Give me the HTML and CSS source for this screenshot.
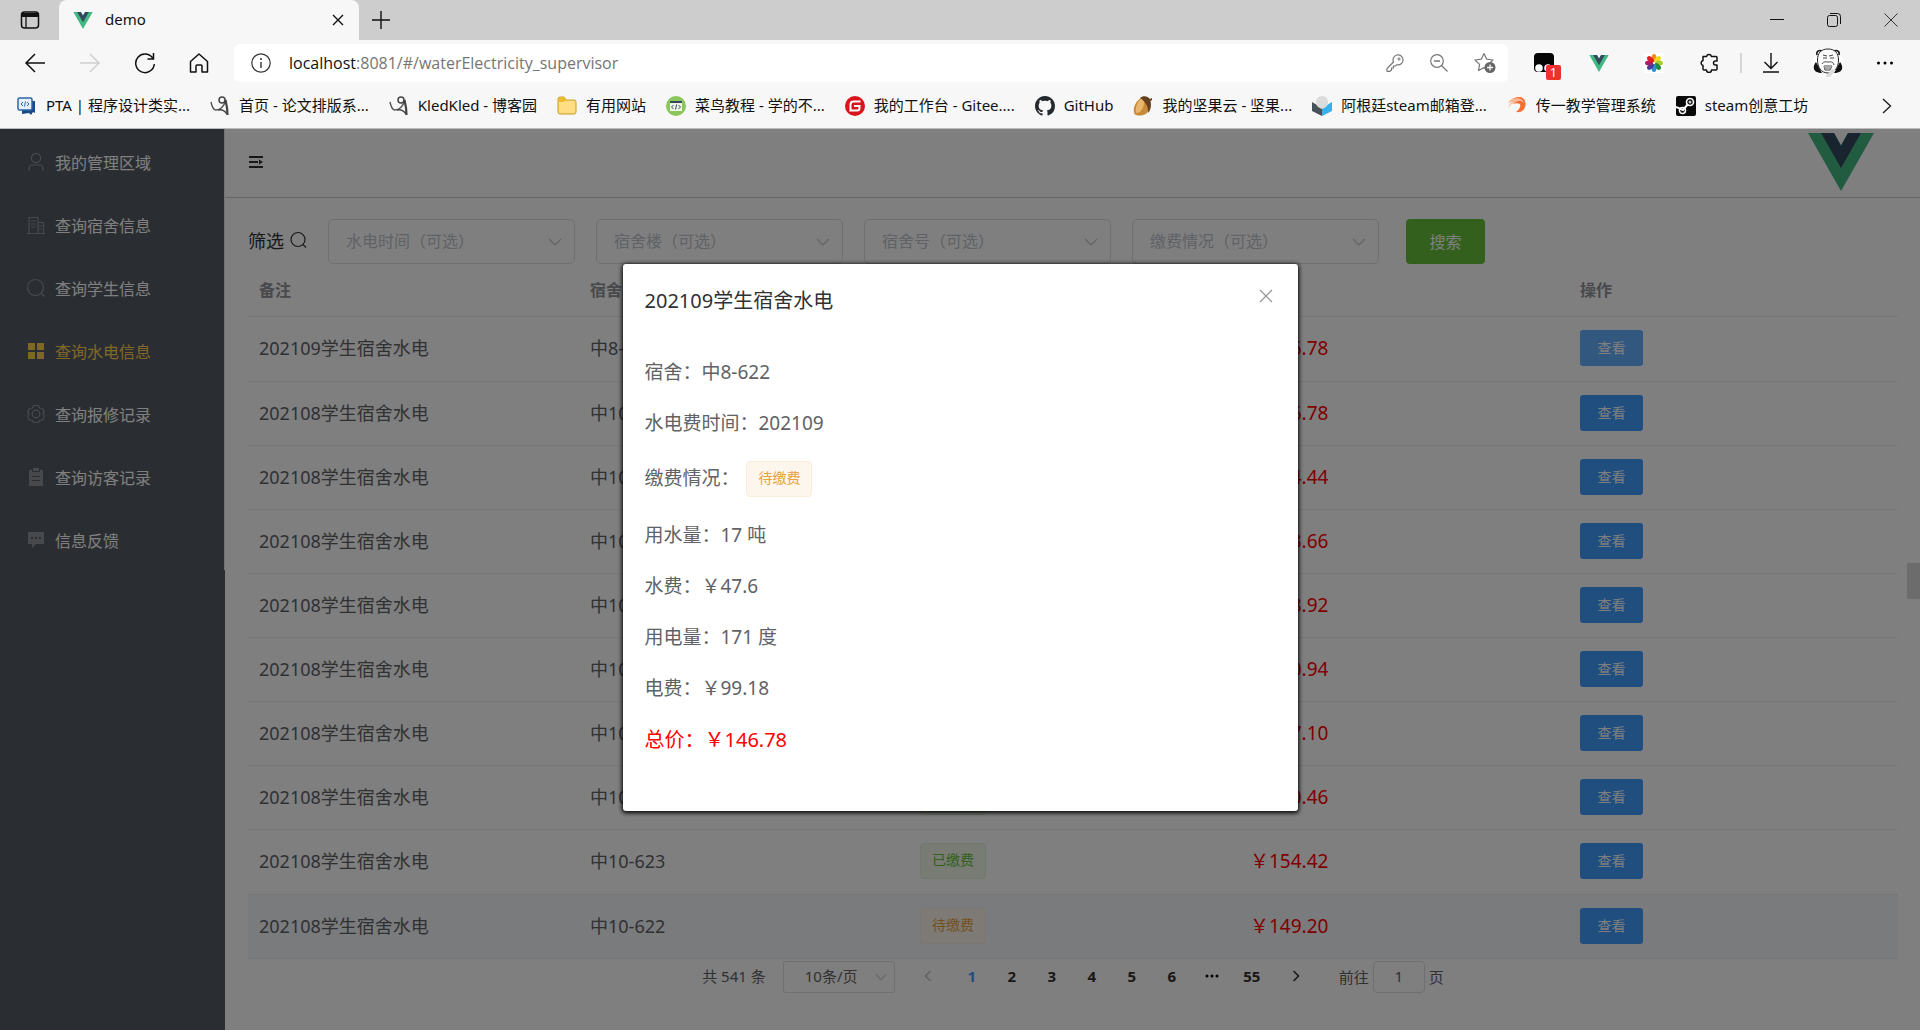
FILE: index.html
```html
<!DOCTYPE html>
<html lang="zh-CN">
<head>
<meta charset="utf-8">
<title>demo</title>
<link rel="stylesheet" href="styles.css">
</head>
<body>
<svg class="defs" aria-hidden="true">
  <symbol id="vue" viewBox="0 0 66 58"><path fill="#42b883" d="M0 0h26l7 12 7-12h26L33 58z"/><path fill="#35495e" d="M13 0h13l7 13 7-13h13L33 35z"/></symbol>
  <symbol id="down" viewBox="0 0 14 14"><path d="M1 4l6 6 6-6" fill="none" stroke="#c0c4cc" stroke-width="1.2"/></symbol>
  <symbol id="blog" viewBox="0 0 20 20"><path d="M1 6c1 5 2 8 5 8 4 0 8-4 10-10" fill="none" stroke="#555" stroke-width="1.400"/><path d="M15.500 4c1 4 2 9 2 15" fill="none" stroke="#444" stroke-width="2.200"/><path d="M8 14c4-1 7 1 9 4" fill="none" stroke="#444" stroke-width="1.400"/><circle cx="12" cy="4" r="3" fill="none" stroke="#444" stroke-width="1.500"/></symbol>
</svg>

<header class="browser">
  <div class="tabs">
    <button class="icon-btn tab-menu" aria-label="标签页操作"><svg width="20" height="20" viewBox="0 0 20 20"><rect x="1.500" y="2" width="17" height="16" rx="3" fill="none" stroke="#111" stroke-width="1.500"/><path d="M2 3h16v4H2z" fill="#111"/><path d="M6 6v12" stroke="#111" stroke-width="1.300"/></svg></button>
    <div class="tab">
      <svg width="20" height="17"><use href="#vue"/></svg>
      <span class="tab-title">demo</span>
      <button class="icon-btn" aria-label="关闭标签页"><svg width="12" height="12" viewBox="0 0 12 12"><path d="M1 1l10 10M11 1L1 11" stroke="#111" stroke-width="1.400"/></svg></button>
    </div>
    <button class="icon-btn" aria-label="新建标签页"><svg width="18" height="18" viewBox="0 0 18 18"><path d="M9 0v18M0 9h18" stroke="#111" stroke-width="1.400"/></svg></button>
    <div class="window-controls">
      <button class="icon-btn" aria-label="最小化"><svg width="14" height="14" viewBox="0 0 14 14"><path d="M0 6.500h14" stroke="#111"/></svg></button>
      <button class="icon-btn" aria-label="还原"><svg width="14" height="14" viewBox="0 0 14 14"><rect x=".5" y="2.500" width="10" height="11" rx="2" fill="none" stroke="#111"/><path d="M3 .5h7.500q3 0 3 3V11" fill="none" stroke="#111"/></svg></button>
      <button class="icon-btn" aria-label="关闭"><svg width="14" height="14" viewBox="0 0 14 14"><path d="M.5.5l13 13M13.500.5l-13 13" stroke="#333"/></svg></button>
    </div>
  </div>

  <div class="toolbar">
    <div class="nav-buttons">
      <button class="icon-btn" aria-label="后退"><svg width="22" height="20" viewBox="0 0 22 20"><path d="M21 10H2M11 1l-9 9 9 9" fill="none" stroke="#111" stroke-width="1.500"/></svg></button>
      <button class="icon-btn" aria-label="前进"><svg width="22" height="20" viewBox="0 0 22 20"><path d="M1 10h19M11 1l9 9-9 9" fill="none" stroke="#d0d0d0" stroke-width="1.500"/></svg></button>
      <button class="icon-btn" aria-label="刷新"><svg width="22" height="22" viewBox="0 0 22 22"><path d="M19 6.500A9.300 9.300 0 1 0 20.300 12M19.500 1v6h-6" fill="none" stroke="#111" stroke-width="1.500"/></svg></button>
      <button class="icon-btn" aria-label="主页"><svg width="20" height="22" viewBox="0 0 20 22"><path d="M1.500 9.500L10 2l8.500 7.500V20h-5.500v-6q0-1-1-1H8q-1 0-1 1v6H1.500z" fill="none" stroke="#111" stroke-width="1.500" stroke-linejoin="round"/></svg></button>
    </div>
    <div class="address">
      <svg width="20" height="20" viewBox="0 0 20 20"><circle cx="10" cy="10" r="9.200" fill="none" stroke="#333" stroke-width="1.200"/><path d="M10 9v6" stroke="#333" stroke-width="1.400"/><circle cx="10" cy="6" r="1" fill="#333"/></svg>
      <p class="url">localhost<span>:8081/#/waterElectricity_supervisor</span></p>
      <button class="icon-btn" aria-label="密码"><svg width="18" height="18" viewBox="0 0 18 18"><path d="M7.500 8A5 5 0 1 1 11 10.800L9 12H7.500v2H5.500v2L4 17.300H1V14.500z" fill="none" stroke="#777" stroke-width="1.200" stroke-linejoin="round"/><circle cx="13" cy="5" r="1.100" fill="none" stroke="#777"/></svg></button>
      <button class="icon-btn" aria-label="缩小"><svg width="18" height="18" viewBox="0 0 18 18"><circle cx="7" cy="7" r="6.300" fill="none" stroke="#777" stroke-width="1.200"/><path d="M4 7h6M11.500 11.500l6 6" stroke="#777" stroke-width="1.300"/></svg></button>
      <button class="icon-btn" aria-label="收藏"><svg width="22" height="22" viewBox="0 0 22 22"><path d="M10 1.500l2.700 5.700 6.300.8-4.600 4.400 1.100 6.100L10 15.600 4.500 18.500l1.100-6.100L1 8l6.300-.8z" fill="none" stroke="#777" stroke-width="1.200" stroke-linejoin="round"/><circle cx="16" cy="15.500" r="5.500" fill="#666"/><path d="M16 12.500v6M13 15.500h6" stroke="#fff" stroke-width="1.300"/></svg></button>
    </div>
    <div class="extensions">
      <button class="icon-btn badge-host" aria-label="扩展"><svg width="20" height="20" viewBox="0 0 20 20"><rect width="20" height="19" rx="4" fill="#050505"/><circle cx="5" cy="15" r="3.800" fill="#fff"/><circle cx="14" cy="15" r="3.800" fill="#fff"/></svg><span class="badge">1</span></button>
      <button class="icon-btn" aria-label="Vue"><svg width="20" height="17"><use href="#vue"/></svg></button>
      <button class="icon-btn" aria-label="图库"><svg width="20" height="20" viewBox="0 0 20 20"><rect width="20" height="20" fill="#fff"/><ellipse cx="10" cy="5" rx="2.500" ry="4" fill="#f28a1c"/><ellipse cx="10" cy="5" rx="2.500" ry="4" fill="#f2d91c" transform="rotate(45 10 10)"/><ellipse cx="10" cy="5" rx="2.500" ry="4" fill="#a8cc2e" transform="rotate(90 10 10)"/><ellipse cx="10" cy="5" rx="2.500" ry="4" fill="#1c8a3c" transform="rotate(135 10 10)"/><ellipse cx="10" cy="5" rx="2.500" ry="4" fill="#2a8fd0" transform="rotate(180 10 10)"/><ellipse cx="10" cy="5" rx="2.500" ry="4" fill="#4a3c9a" transform="rotate(225 10 10)"/><ellipse cx="10" cy="5" rx="2.500" ry="4" fill="#a02070" transform="rotate(270 10 10)"/><ellipse cx="10" cy="5" rx="2.500" ry="4" fill="#e01c24" transform="rotate(315 10 10)"/></svg></button>
      <button class="icon-btn" aria-label="扩展管理"><svg width="20" height="20" viewBox="0 0 20 20"><path d="M4 3.500h3.500a2.600 2.600 0 0 1 5 0H17q1 0 1 1v3.500h-1.500a2 2 0 0 0 0 4H18V16q0 1-1 1h-4.500a2.500 2.500 0 0 1-5 0H5q-1 0-1-1v-3.500a2.600 2.600 0 0 1 0-5z" fill="none" stroke="#111" stroke-width="1.500" stroke-linejoin="round"/></svg></button>
      <span class="divider"></span>
      <button class="icon-btn" aria-label="下载"><svg width="16" height="20" viewBox="0 0 16 20"><path d="M8 0v15M1.500 9L8 15.500 14.500 9M0 19h16" fill="none" stroke="#111" stroke-width="1.400"/></svg></button>
      <button class="icon-btn avatar" aria-label="个人资料"><svg width="30" height="30" viewBox="0 0 30 30"><circle cx="15" cy="15" r="15" fill="#fff"/><path d="M3 14c-4 5-3 11 6 11zM27 14c4 5 3 11-6 11z" fill="#111"/><path d="M4 7c-1-4 2-5 5-4M21 3c3-1 6 0 5 4" stroke="#111" stroke-width="1.500" fill="none"/><path d="M15 1C8 1 4.500 5 4.500 12S8 25 15 25s10.500-6 10.500-13S22 1 15 1z" fill="#fafafa" stroke="#222"/><path d="M10 7l4 1M20 7l-4 1M10 10h4M17 10h4M9 16c2-3 4-2 6-2s5-1 6 3M11 18h8l-2 4h-5z" stroke="#444" fill="none"/><path d="M11 18h8l-2 3h-5z" fill="#aaa"/><path d="M12 29l7-8 4 1-6 7z" fill="#ddd"/></svg></button>
      <button class="icon-btn" aria-label="更多"><svg width="18" height="6" viewBox="0 0 18 6"><circle cx="2.500" cy="3" r="1.500"/><circle cx="9" cy="3" r="1.500"/><circle cx="15.500" cy="3" r="1.500"/></svg></button>
    </div>
  </div>

  <nav class="bookmarks" aria-label="书签">
    <a href="#"><svg width="20" height="20" viewBox="0 0 20 20"><path d="M5 5h13v12l-2-1-2 3-2-2-7 1z" fill="#174a86"/><rect x="1" y="2" width="14" height="12" rx="1.500" fill="#e9eff7" stroke="#2c66ab" stroke-width="1.500"/><path d="M6 6L4 8l2 2M10 6l2 2-2 2M8.500 5.500l-1 5" fill="none" stroke="#2c66ab"/></svg><span>PTA | 程序设计类实...</span></a>
    <a href="#"><svg width="20" height="20"><use href="#blog"/></svg><span>首页 - 论文排版系...</span></a>
    <a href="#"><svg width="20" height="20"><use href="#blog"/></svg><span>KledKled - 博客园</span></a>
    <a href="#"><svg width="20" height="20" viewBox="0 0 20 20"><path d="M1 3q0-2 2-2h4l2 3h8q2 0 2 2v10q0 2-2 2H3q-2 0-2-2z" fill="#ffdd83" stroke="#c79a1c"/><path d="M1.500 6H6q2 0 3-2L7.500 1.500H3q-1.500 0-1.500 1.500z" fill="#efba2c"/></svg><span>有用网站</span></a>
    <a href="#"><svg width="20" height="20" viewBox="0 0 20 20"><circle cx="10" cy="10" r="10" fill="#8ac65a"/><rect x="4" y="5" width="12" height="10" fill="#eef5e8"/><path d="M4 5h12v2H4z" fill="#34495e"/><path d="M7.500 9l-2 2 2 2M12.500 9l2 2-2 2M10.600 8.500l-1 5" stroke="#34495e" fill="none"/></svg><span>菜鸟教程 - 学的不...</span></a>
    <a href="#"><svg width="20" height="20" viewBox="0 0 20 20"><circle cx="10" cy="10" r="10" fill="#d8141d"/><path d="M15.500 5.500H8.500q-3 0-3 3v6h6.500q2.500 0 2.500-2.500v-2H9" fill="none" stroke="#fff" stroke-width="2"/></svg><span>我的工作台 - Gitee....</span></a>
    <a href="#"><svg width="20" height="20" viewBox="0 0 16 16"><path fill="#24292e" d="M8 0C3.580 0 0 3.580 0 8c0 3.540 2.290 6.530 5.470 7.590.4.070.55-.17.55-.38 0-.19-.01-.82-.01-1.490-2.010.37-2.530-.49-2.690-.94-.09-.23-.48-.94-.82-1.130-.28-.15-.68-.52-.01-.53.63-.01 1.080.58 1.230.82.72 1.210 1.870.87 2.330.66.07-.52.28-.87.51-1.070-1.780-.2-3.640-.89-3.640-3.950 0-.87.31-1.590.82-2.150-.08-.2-.36-1.020.08-2.120 0 0 .67-.21 2.200.82.64-.18 1.320-.27 2-.27s1.360.09 2 .27c1.530-1.040 2.200-.82 2.200-.82.44 1.100.16 1.920.08 2.120.51.56.82 1.270.82 2.150 0 3.070-1.870 3.750-3.650 3.950.29.25.54.73.54 1.480 0 1.070-.01 1.930-.01 2.200 0 .21.15.46.55.38A8.010 8.010 0 0 0 16 8c0-4.420-3.580-8-8-8z"/></svg><span>GitHub</span></a>
    <a href="#"><svg width="20" height="20" viewBox="0 0 20 20"><path d="M8 2C3 5 0 11 1 16q0 3 4 3.500c6 .5 11-2 12-9z" fill="#c98a3c"/><path d="M8 3c-4 3-6 9-5 14 6 0 9-8 8-14z" fill="#e9b86c"/><path d="M7 2c3-3 8-2 10 1l2-1v2l-1.500 1c1 4 .5 9-2.500 12C16 11 12 5 7 2z" fill="#65401f"/></svg><span>我的坚果云 - 坚果...</span></a>
    <a href="#"><svg width="20" height="20" viewBox="0 0 20 20"><path d="M0 6l10 6v8L0 15z" fill="#46515a"/><path d="M20 6l-10 6v8l10-5z" fill="#35b1ee"/><path d="M10 0c4 0 6 3 6 6s-1 5-6 7C5 11 4 9 4 6s2-6 6-6z" fill="#dcdcdc"/></svg><span>阿根廷steam邮箱登...</span></a>
    <a href="#"><svg width="20" height="20" viewBox="0 0 20 20"><path d="M5 3c7-4 12-1 13 3-2-2-8-2-13 2-2 1-3 2-4 5 0-3 2-6 5-7-2 0-4 0-5 2 0-2 2-4 4-5z" fill="#f9b795"/><path d="M6 3c6-4 12-2 12.500 4 .5 6-4 10-9.500 9 3-2 5-5 4-8-2-1-5-1-7 0 4-4 9-4 11-1-1-4-6-6-11-4z" fill="#f37032"/></svg><span>传一教学管理系统</span></a>
    <a href="#"><svg width="20" height="20" viewBox="0 0 20 20"><rect width="20" height="20" rx="2" fill="#0a0a0a"/><path d="M0 11l7 3 5-6" stroke="#fff" stroke-width="2" fill="none"/><circle cx="14" cy="6" r="3.500" fill="none" stroke="#fff" stroke-width="1.600"/><circle cx="14" cy="6" r="1.500" fill="#ccc"/><circle cx="6.500" cy="14.500" r="3" fill="none" stroke="#fff" stroke-width="1.500"/></svg><span>steam创意工坊</span></a>
    <button class="icon-btn more" aria-label="更多书签"><svg width="10" height="16" viewBox="0 0 10 16"><path d="M1 1l7.500 7L1 15" fill="none" stroke="#222" stroke-width="1.400"/></svg></button>
  </nav>
</header>

<div class="page">
  <aside class="sidebar">
    <nav class="menu">
      <a href="#"><svg width="20" height="20" viewBox="0 0 20 20" fill="none" stroke="currentColor" stroke-width="1.200"><circle cx="10" cy="6" r="4.600"/><path d="M3 19v-2q0-4 4-4h6q4 0 4 4v2"/></svg><span>我的管理区域</span></a>
      <a href="#"><svg width="20" height="20" viewBox="0 0 20 20" fill="none" stroke="currentColor" stroke-width="1.200"><path d="M1 18.500h18M3 18V2.500h9V18M12 7.500h5.500V18M5 6h5M5 9h5M5 12h5M13 11h3M13 14h3"/></svg><span>查询宿舍信息</span></a>
      <a href="#"><svg width="20" height="20" viewBox="0 0 20 20" fill="none" stroke="currentColor" stroke-width="1.200"><circle cx="9.500" cy="9.500" r="8"/><path d="M15.500 15.500l3 3"/></svg><span>查询学生信息</span></a>
      <a href="#" class="active"><svg width="20" height="20" viewBox="0 0 20 20" fill="currentColor"><path d="M2 2h7v7H2zM11 2h7v7h-7zM2 11h7v7H2zM11 11h7v7h-7z"/></svg><span>查询水电信息</span></a>
      <a href="#"><svg width="20" height="20" viewBox="0 0 20 20" fill="none" stroke="currentColor" stroke-width="1.200"><path d="M7.500 1.500h5l1 2.500 3 .5 2 4-1.500 1.500 1.500 2-2 4-3 .5-1 2h-5l-1-2-3-.5-2-4L3 10 1.500 8.500l2-4 3-.5z" stroke-linejoin="round"/><circle cx="10" cy="10" r="3.800"/></svg><span>查询报修记录</span></a>
      <a href="#"><svg width="20" height="20" viewBox="0 0 20 20"><path d="M3 3h3v2h8V3h3v16H3z" fill="currentColor"/><path d="M7 1h6v3H7z" fill="currentColor"/><path d="M6 9.500h8M6 13.500h8" stroke="#545c64" stroke-width="1.200"/></svg><span>查询访客记录</span></a>
      <a href="#"><svg width="20" height="20" viewBox="0 0 20 20"><path d="M2 2h16v12h-8l-4 4v-4H2z" fill="currentColor"/><path d="M5 8h2M9 8h2M13 8h2" stroke="#545c64" stroke-width="2"/></svg><span>信息反馈</span></a>
    </nav>
  </aside>

  <div class="content">
    <header class="page-header">
      <button class="icon-btn" aria-label="折叠菜单"><svg width="16" height="16" viewBox="0 0 16 16"><path d="M1 3h14M1 8h9M1 13h14" stroke="#303133" stroke-width="2"/><path d="M11 5.500l4 2.500-4 2.500z" fill="#303133"/></svg></button>
      <svg width="66" height="58" role="img" aria-label="Vue"><use href="#vue"/></svg>
    </header>

    <main>
      <form class="filters">
        <span class="filter-label">筛选 <svg width="20" height="20" viewBox="0 0 20 20" fill="none" stroke="currentColor" stroke-width="1.200"><circle cx="9" cy="9.500" r="7"/><path d="M14 14.500l3 3"/></svg></span>
        <div class="select"><select aria-label="水电时间"><option>水电时间（可选）</option></select><svg width="14" height="14"><use href="#down"/></svg></div>
        <div class="select"><select aria-label="宿舍楼"><option>宿舍楼（可选）</option></select><svg width="14" height="14"><use href="#down"/></svg></div>
        <div class="select"><select aria-label="宿舍号"><option>宿舍号（可选）</option></select><svg width="14" height="14"><use href="#down"/></svg></div>
        <div class="select"><select aria-label="缴费情况"><option>缴费情况（可选）</option></select><svg width="14" height="14"><use href="#down"/></svg></div>
        <button type="button" class="search">搜索</button>
      </form>

      <table class="bills">
        <thead><tr><th>备注</th><th>宿舍</th><th>缴费情况</th><th>总价</th><th>操作</th></tr></thead>
        <tbody>
          <tr><td>202109学生宿舍水电</td><td>中8-622</td><td><span class="tag warning">待缴费</span></td><td class="price">￥146.78</td><td><button class="view focused">查看</button></td></tr>
          <tr><td>202108学生宿舍水电</td><td>中10-630</td><td><span class="tag success">已缴费</span></td><td class="price">￥146.78</td><td><button class="view">查看</button></td></tr>
          <tr><td>202108学生宿舍水电</td><td>中10-629</td><td><span class="tag success">已缴费</span></td><td class="price">￥134.44</td><td><button class="view">查看</button></td></tr>
          <tr><td>202108学生宿舍水电</td><td>中10-628</td><td><span class="tag success">已缴费</span></td><td class="price">￥153.66</td><td><button class="view">查看</button></td></tr>
          <tr><td>202108学生宿舍水电</td><td>中10-627</td><td><span class="tag success">已缴费</span></td><td class="price">￥148.92</td><td><button class="view">查看</button></td></tr>
          <tr><td>202108学生宿舍水电</td><td>中10-626</td><td><span class="tag success">已缴费</span></td><td class="price">￥150.94</td><td><button class="view">查看</button></td></tr>
          <tr><td>202108学生宿舍水电</td><td>中10-625</td><td><span class="tag success">已缴费</span></td><td class="price">￥137.10</td><td><button class="view">查看</button></td></tr>
          <tr><td>202108学生宿舍水电</td><td>中10-624</td><td><span class="tag success">已缴费</span></td><td class="price">￥140.46</td><td><button class="view">查看</button></td></tr>
          <tr><td>202108学生宿舍水电</td><td>中10-623</td><td><span class="tag success">已缴费</span></td><td class="price">￥154.42</td><td><button class="view">查看</button></td></tr>
          <tr class="hovered"><td>202108学生宿舍水电</td><td>中10-622</td><td><span class="tag warning">待缴费</span></td><td class="price">￥149.20</td><td><button class="view">查看</button></td></tr>
        </tbody>
      </table>

      <nav class="pagination" aria-label="分页">
        <span class="total">共 541 条</span>
        <div class="select page-size"><select aria-label="每页条数"><option>10条/页</option></select><svg width="12" height="12"><use href="#down"/></svg></div>
        <div class="pager">
          <button aria-label="上一页" disabled><svg width="8" height="12" viewBox="0 0 8 12"><path d="M6.500 1l-5 5 5 5" fill="none" stroke="#c0c4cc" stroke-width="1.600"/></svg></button>
          <button class="current">1</button><button>2</button><button>3</button><button>4</button><button>5</button><button>6</button>
          <button aria-label="向后 5 页"><svg width="14" height="4" viewBox="0 0 14 4"><circle cx="2" cy="2" r="1.500"/><circle cx="7" cy="2" r="1.500"/><circle cx="12" cy="2" r="1.500"/></svg></button>
          <button>55</button>
          <button aria-label="下一页"><svg width="8" height="12" viewBox="0 0 8 12"><path d="M1.500 1l5 5-5 5" fill="none" stroke="#303133" stroke-width="1.600"/></svg></button>
        </div>
        <label class="jump">前往<input type="text" value="1">页</label>
      </nav>
    </main>
  </div>

  <span class="side-handle"></span>

  <div class="overlay">
    <section class="dialog" role="dialog" aria-modal="true" aria-labelledby="dialog-title">
      <header>
        <h2 id="dialog-title">202109学生宿舍水电</h2>
        <button class="icon-btn" aria-label="关闭"><svg width="14" height="14" viewBox="0 0 14 14"><path d="M1 1l12 12M13 1L1 13" stroke="#909399" stroke-width="1.200"/></svg></button>
      </header>
      <div class="dialog-body">
        <p>宿舍：中8-622</p>
        <p>水电费时间：202109</p>
        <p>缴费情况： <span class="tag warning">待缴费</span></p>
        <p>用水量：17 吨</p>
        <p>水费：￥47.6</p>
        <p>用电量：171 度</p>
        <p>电费：￥99.18</p>
        <p class="sum">总价：￥146.78</p>
      </div>
    </section>
  </div>
</div>
</body>
</html>
```
FILE: styles.css
```css
* { box-sizing: border-box; }

body {
  margin: 0;
  min-height: 100vh;
  display: flex;
  flex-direction: column;
  font-family: "Noto Sans", "Noto Sans CJK SC", sans-serif;
  color: #303133;
  overflow: hidden;
}

button, input, select { font-family: inherit; }
svg { display: block; flex: none; }
a { color: inherit; text-decoration: none; }
.defs { position: absolute; width: 0; height: 0; }

.icon-btn {
  padding: 0;
  border: 0;
  background: none;
  display: inline-flex;
  align-items: center;
  justify-content: center;
}

/* Browser window */
.browser {
  background: #f7f7f7;
  border-bottom: 1px solid #bbb;
  color: #111;
}

.tabs {
  height: 40px;
  display: flex;
  align-items: center;
  background: #cdcdcd;
}
.tab-menu { width: 59px; }
.tab {
  width: 300px;
  height: 40px;
  padding: 0 15px 0 14px;
  display: flex;
  align-items: center;
  gap: 12px;
  background: #f7f7f7;
  border-radius: 8px 8px 0 0;
  margin-right: 13px;
}
.tab-title { flex: 1; padding-bottom: 2px; font-size: 15px; }
.window-controls {
  margin-left: auto;
  padding-right: 22px;
  display: flex;
  gap: 43px;
}

.toolbar {
  height: 47px;
  padding: 4px 26px 5px 24px;
  display: flex;
  align-items: center;
}
.nav-buttons {
  display: flex;
  align-items: center;
  gap: 33px;
  margin-right: 25px;
}
.address {
  flex: 1;
  height: 38px;
  padding: 0 12px 0 17px;
  display: flex;
  align-items: center;
  gap: 26px;
  background: #fff;
  border-radius: 6px;
}
.url {
  flex: 1;
  margin: 0 0 0 -8px;
  font-family: "Open Sans", sans-serif;
  font-size: 16px;
}
.url span { color: #757575; }
.extensions {
  display: flex;
  align-items: center;
  gap: 35px;
  margin-left: 26px;
}
.badge-host { position: relative; }
.badge {
  position: absolute;
  left: 12px;
  top: 12px;
  width: 15px;
  height: 15px;
  border-radius: 2px;
  background: #f03030;
  color: #fff;
  font-size: 12px;
  line-height: 15px;
}
.divider { width: 2px; height: 20px; margin: 0 -14px; background: #d5d5d5; }
.divider + .icon-btn { margin-right: -1px; }
.avatar { margin-right: -2px; }

.bookmarks {
  height: 41px;
  padding: 0 28px 4px 17px;
  display: flex;
  align-items: center;
  gap: 20px;
  font-size: 15px;
  white-space: nowrap;
}
.bookmarks a { display: flex; align-items: center; gap: 9px; }
.bookmarks a span { padding-bottom: 2px; }
.more { margin-left: auto; }

/* Application */
.page {
  position: relative;
  flex: 1;
  display: flex;
  background: #fff;
}

.sidebar { width: 225px; background: #545c64; }
.menu { border-right: 1px solid #e6e6e6; }
.menu a {
  height: 63px;
  padding: 2px 0 0 26px;
  display: flex;
  align-items: center;
  gap: 9px;
  font-size: 16px;
  color: #fff;
}
.menu svg { color: #909399; }
.menu .active, .menu .active svg { color: #ffd04b; }

.content { flex: 1; min-width: 0; }
.page-header {
  height: 69px;
  padding: 0 46px 2px 23px;
  display: flex;
  align-items: center;
  justify-content: space-between;
  border-bottom: 1px solid #ccc;
}

main { padding: 21px 22px 0 23px; }

.filters { display: flex; align-items: center; gap: 21px; }
.filter-label {
  display: flex;
  align-items: center;
  width: 59px;
  padding-bottom: 3px;
  font-size: 18px;
  white-space: pre;
}
.select {
  width: 247px;
  height: 45px;
  display: grid;
  align-items: center;
}
.select select {
  grid-area: 1 / 1;
  width: 100%;
  height: 100%;
  padding: 0 17px 2px;
  appearance: none;
  border: 1px solid #dcdfe6;
  border-radius: 5px;
  background: none;
  color: #c0c4cc;
  font-size: 16px;
}
.select svg { grid-area: 1 / 1; justify-self: end; margin-right: 13px; }
.search {
  height: 45px;
  width: 79px;
  margin-left: 6px;
  padding: 0 0 2px;
  border: 0;
  border-radius: 4px;
  background: #67c23a;
  color: #fff;
  font-size: 16px;
}

.bills {
  width: 100%;
  table-layout: fixed;
  border-collapse: separate;
  border-spacing: 0;
  font-size: 18px;
  color: #606266;
}
.bills th, .bills td {
  padding: 0 11px 2px;
  border-bottom: 1px solid #ebeef5;
  text-align: left;
}
.bills th { height: 53px; font-size: 16px; color: #909399; }
.bills td { height: 64px; line-height: 24px; }
.bills tr:nth-child(8n+1) td { height: 65px; }
.bills th + th, .bills td + td { padding-left: 12px; }
.bills .hovered { background: #f5f7fa; }
.bills .price { color: #f00; font-size: 19px; }

.tag {
  display: inline-block;
  height: 36px;
  padding: 0 11px;
  border: 1px solid;
  border-radius: 4px;
  font-size: 14px;
  line-height: 32px;
  vertical-align: middle;
}
.tag.warning { color: #e6a23c; background: #fdf6ec; border-color: #faecd8; }
.tag.success { color: #67c23a; background: #f0f9eb; border-color: #e1f3d8; }

.view {
  display: block;
  width: 63px;
  height: 36px;
  padding: 0 0 2px;
  border: 0;
  border-radius: 3px;
  background: #409eff;
  color: #fff;
  font-size: 14px;
}
.view.focused { background: #66b1ff; }

.pagination {
  display: flex;
  justify-content: center;
  align-items: center;
  padding-top: 2px;
  font-size: 15px;
  color: #606266;
  line-height: 20px;
}
.total { margin-right: 17px; padding-bottom: 2px; }
.page-size { width: 112px; height: 32px; margin-right: 13px; }
.page-size select { font-size: 15px; color: #606266; padding: 0 21px 2px; border-radius: 3px; }
.page-size svg { margin-right: 8px; }
.pager { display: flex; }
.pager button {
  width: 40px;
  height: 32px;
  padding: 0 0 2px;
  border: 0;
  background: none;
  display: flex;
  align-items: center;
  justify-content: center;
  font-size: 15px;
  font-weight: 700;
  color: #303133;
}
.pager button:first-child { margin-right: 4px; }
.pager button:last-child { margin-left: 4px; }
.pager .current { color: #409eff; }
.jump { display: flex; align-items: center; gap: 4px; margin-left: 23px; }
.jump input {
  width: 52px;
  height: 32px;
  padding: 0 0 2px;
  border: 1px solid #dcdfe6;
  border-radius: 4px;
  background: none;
  color: #606266;
  font-size: 15px;
  text-align: center;
}

.side-handle {
  position: absolute;
  right: 0;
  top: 434px;
  width: 13px;
  height: 36px;
  background: #d8d8d8;
}

.overlay {
  position: absolute;
  inset: 0;
  padding-top: 135px;
  background: rgba(0, 0, 0, .5);
}
.dialog {
  width: 675px;
  margin: 0 auto;
  padding: 23px 22px 46px;
  background: #fff;
  border-radius: 3px;
  box-shadow: 0 1px 4px 1px #000;
}
.dialog header {
  display: flex;
  justify-content: space-between;
  align-items: flex-start;
  padding-right: 3px;
}
.dialog header .icon-btn { margin-top: 2px; }
.dialog h2 { margin: 0; font-size: 20px; font-weight: 400; line-height: 27px; }
.dialog-body { padding-top: 33px; font-size: 19px; color: #606266; }
.dialog-body p { margin: 0; padding: 12px 0; line-height: 27px; }
.dialog-body .tag { margin: 0 0 1px 2px; line-height: 32px; }
.dialog-body .sum { color: #f00; font-size: 20px; }
```
